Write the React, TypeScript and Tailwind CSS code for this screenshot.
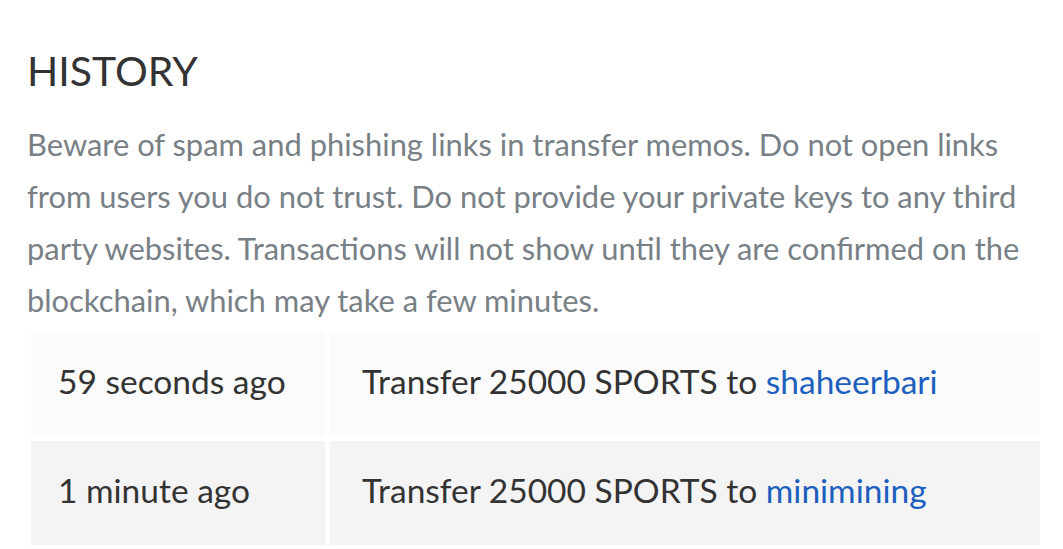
const rows = [
  { when: '59 seconds ago', amount: '25000 SPORTS', to: 'shaheerbari', bg: 'bg-[#fbfbfb]' },
  { when: '1 minute ago', amount: '25000 SPORTS', to: 'minimining', bg: 'bg-[#f4f4f4]' },
];

export default function App() {
  return (
    <div className="min-h-screen bg-white font-['Lato',sans-serif] overflow-hidden">
      <div className="pl-[27px] pt-[46px]">
        <h2 className="text-[41px] leading-[50px] text-[#333333] font-normal">HISTORY</h2>
        <p className="mt-[23px] text-[30.9px] leading-[52px] text-[#788086] whitespace-nowrap">
          Beware of spam and phishing links in transfer memos. Do not open links
          <br />
          from users you do not trust. Do not provide your private keys to any third
          <br />
          party websites. Transactions will not show until they are confirmed on the
          <br />
          blockchain, which may take a few minutes.
        </p>
      </div>
      <div className="ml-[31px] mt-[5px] w-[1009px] grid grid-cols-[294px_1fr] gap-[5px]">
        {rows.map(r => (
          <div key={r.when} className="contents">
            <div className={`${r.bg} h-[104px] flex items-center pl-[27px] pb-[5px] text-[33.5px] text-[#333333]`}>
              {r.when}
            </div>
            <div className={`${r.bg} h-[104px] flex items-center pl-[32px] pb-[5px] text-[33.5px] text-[#333333] whitespace-nowrap`}>
              Transfer {r.amount} to&nbsp;
              <a href="#" className="text-[#1c5fbf]">
                {r.to}
              </a>
            </div>
          </div>
        ))}
      </div>
    </div>
  );
}
